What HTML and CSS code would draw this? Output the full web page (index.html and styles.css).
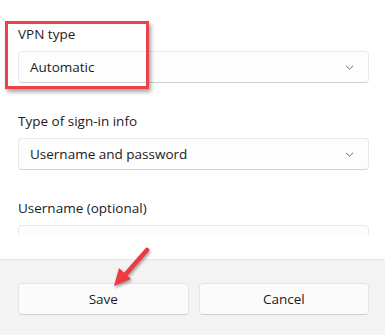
FILE: index.html
```html
<!DOCTYPE html>
<html lang="en">
<head>
    <meta charset="UTF-8">
    <title>Add a VPN connection</title>
    <link rel="stylesheet" href="styles.css">
</head>
<body>
    <div class="dialog">
        <div class="content">
            <div class="field">
                <label>VPN type</label>
                <div class="select">
                    <span>Automatic</span>
                    <svg class="chevron" width="9" height="5" viewBox="0 0 9 5"><path d="M1 0.8l3.5 3.4 3.5-3.4" fill="none" stroke="#6a6a6a" stroke-width="1"/></svg>
                </div>
            </div>

            <div class="field">
                <label>Type of sign-in info</label>
                <div class="select">
                    <span>Username and password</span>
                    <svg class="chevron" width="9" height="5" viewBox="0 0 9 5"><path d="M1 0.8l3.5 3.4 3.5-3.4" fill="none" stroke="#6a6a6a" stroke-width="1"/></svg>
                </div>
            </div>

            <div class="field">
                <label>Username (optional)</label>
                <div class="textbox"></div>
            </div>

            <!-- annotation box -->
            <div class="highlight"></div>
        </div>

        <div class="footer">
            <button class="btn">Save</button>
            <button class="btn">Cancel</button>
        </div>

        <!-- annotation arrow -->
        <svg class="arrow" width="60" height="60" viewBox="0 0 60 60">
            <line x1="45" y1="10" x2="23" y2="35" stroke="#ee3b41" stroke-width="4.5" stroke-linecap="round"/>
            <polygon points="12,46 17,28 29,39" fill="#ee3b41"/>
        </svg>
    </div>
</body>
</html>
```

FILE: styles.css
```css
body {
    margin: 0;
    font-family: "Open Sans", "Noto Sans", sans-serif;
    font-size: 13.5px;
    color: #1b1b1b;
    background-color: #fff;
}
.dialog {
    position: relative;
    width: 385px;
    height: 335px;
    display: flex;
    flex-direction: column;
    overflow: hidden;
}
.content {
    position: relative;
    height: 259px;
    overflow: hidden;
    padding: 24px 16px 0 18px;
    box-sizing: border-box;
    display: flex;
    flex-direction: column;
    gap: 28px;
}
/* scroll fade at the bottom of the form */
.content::after {
    content: "";
    position: absolute;
    left: 0;
    right: 0;
    bottom: 0;
    height: 27px;
    background: linear-gradient(rgba(255, 255, 255, 0), #fff 6px);
}
.field label {
    display: block;
    line-height: 20px;
    margin-bottom: 7px;
}
.select,
.textbox {
    height: 32px;
    box-sizing: border-box;
    border: 1px solid #e8e8e8;
    border-bottom-color: #d2d2d2;
    border-radius: 4px;
    background-color: #fdfdfd;
    display: flex;
    align-items: center;
    justify-content: space-between;
    padding: 0 14px 0 11px;
}
.chevron {
    margin-top: 1px;
}
.highlight {
    position: absolute;
    left: 5px;
    top: 21px;
    width: 144px;
    height: 68px;
    box-sizing: border-box;
    border: 3px solid #eb424a;
    box-shadow: 2px 3px 4px rgba(0, 0, 0, 0.35);
}
.footer {
    flex: 1;
    background-color: #f3f3f3;
    border-top: 1px solid #e5e5e5;
    display: flex;
    gap: 10px;
    padding: 23px 16px 0 18px;
}
.btn {
    flex: 1;
    height: 32px;
    font-family: inherit;
    font-size: 13.5px;
    color: #1b1b1b;
    background-color: #fbfbfb;
    border: 1px solid #e5e5e5;
    border-bottom-color: #cfcfcf;
    border-radius: 4px;
}
.arrow {
    position: absolute;
    left: 102px;
    top: 240px;
    filter: drop-shadow(1px 2px 1.5px rgba(0, 0, 0, 0.35));
}
```
